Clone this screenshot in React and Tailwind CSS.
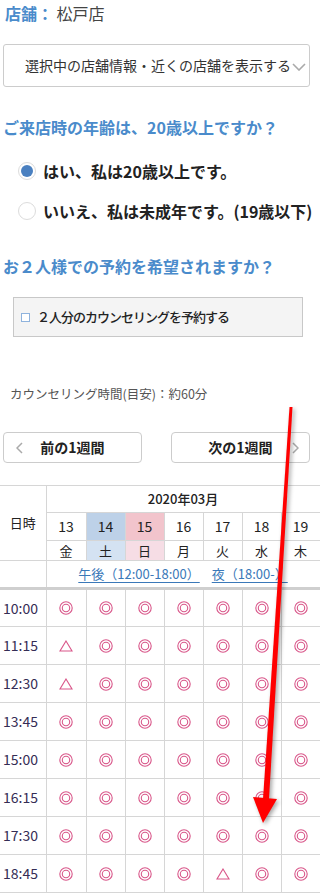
const days = [
  { d: "13", w: "金" },
  { d: "14", w: "土", dateBg: "bg-[#bdd1e8]", dayBg: "bg-[#d4e2f2]" },
  { d: "15", w: "日", dateBg: "bg-[#f2c4cc]", dayBg: "bg-[#f6dde5]" },
  { d: "16", w: "月" },
  { d: "17", w: "火" },
  { d: "18", w: "水" },
  { d: "19", w: "木" },
];

// o = ◎, t = △
const slots = [
  ["10:00", "ooooooo"],
  ["11:15", "toooooo"],
  ["12:30", "toooooo"],
  ["13:45", "ooooooo"],
  ["15:00", "ooooooo"],
  ["16:15", "ooooooo"],
  ["17:30", "ooooooo"],
  ["18:45", "ooootoo"],
];

const Mark = ({ type }) =>
  type === "o" ? (
    <svg width="14" height="14" viewBox="0 0 14 14" className="mx-auto block">
      <circle cx="7" cy="7" r="6.2" fill="none" stroke="#d9578a" strokeWidth="1.1" />
      <circle cx="7" cy="7" r="3.7" fill="none" stroke="#d9578a" strokeWidth="1.1" />
    </svg>
  ) : (
    <svg width="14" height="12" viewBox="0 0 14 12" className="mx-auto block">
      <polygon points="7,1 13,11 1,11" fill="none" stroke="#d9578a" strokeWidth="1.1" />
    </svg>
  );

const Radio = ({ checked, children }) => (
  <div className="flex items-center h-[40px] pl-[18px]">
    <span className="w-[18px] h-[18px] rounded-full border border-[#dcdcdc] bg-white flex items-center justify-center">
      {checked && <span className="w-[12px] h-[12px] rounded-full bg-[#4a80c0]" />}
    </span>
    <span className="ml-[7px] text-[16px] font-bold text-[#222] whitespace-nowrap">{children}</span>
  </div>
);

const App = () => {
  return (
    <div className="relative w-[320px] h-[895px] overflow-hidden bg-white font-['Noto_Sans_CJK_JP',sans-serif] text-[#333]">
      <div className="h-[44px] pt-[2px] pl-[5px] text-[16px] leading-[22px] whitespace-nowrap">
        <span className="font-bold text-[#4a8bcb]">店舗：</span>
        <span className="text-[#444]"> 松戸店</span>
      </div>

      <div className="ml-[3px] w-[307px] h-[43px] border border-[#cccccc] rounded-[3px] flex items-center pl-[21px] text-[14px] text-[#333] whitespace-nowrap">
        <span>選択中の店舗情報・近くの店舗を表示する</span>
        <svg width="14" height="8" viewBox="0 0 14 8" className="ml-[1px] mt-[2px]">
          <polyline points="1,1 7,7 13,1" fill="none" stroke="#aaa" strokeWidth="1.6" />
        </svg>
      </div>

      <h2 className="mt-[29px] pl-[3px] text-[16px] leading-[22px] font-bold text-[#4a8bcb] whitespace-nowrap">
        ご来店時の年齢は、20歳以上ですか？
      </h2>
      <div className="mt-[13px]">
        <Radio checked>はい、私は20歳以上です。</Radio>
        <Radio>いいえ、私は未成年です。(19歳以下)</Radio>
      </div>

      <h2 className="mt-[24px] pl-[3px] text-[16px] leading-[22px] font-bold text-[#4a8bcb] whitespace-nowrap">
        お２人様での予約を希望されますか？
      </h2>
      <div className="mt-[20px] ml-[13px] w-[290px] h-[40px] border border-[#c8c8c8] bg-[#f4f4f4] flex items-center pl-[7px]">
        <span className="w-[9px] h-[9px] border border-[#8fb3dd] bg-white" />
        <span className="ml-[7px] text-[13px] font-medium tracking-[-1px] text-[#222] whitespace-nowrap">２人分のカウンセリングを予約する</span>
      </div>

      <p className="mt-[49px] pl-[10px] text-[12.5px] leading-[16px] text-[#555] whitespace-nowrap">
        カウンセリング時間(目安)：約60分
      </p>

      <div className="mt-[30px] flex gap-[29px] pl-[3px]">
        <button className="relative w-[139px] h-[31px] border border-[#cccccc] rounded-[4px] bg-white text-[14px] font-bold text-[#222] flex items-center justify-center">
          <svg width="7" height="12" viewBox="0 0 7 12" className="absolute left-[12px] top-[9px]">
            <polyline points="6,1 1,6 6,11" fill="none" stroke="#aaa" strokeWidth="1.5" />
          </svg>
          前の1週間
        </button>
        <button className="relative w-[139px] h-[31px] border border-[#cccccc] rounded-[4px] bg-white text-[14px] font-bold text-[#222] flex items-center justify-center">
          次の1週間
          <svg width="7" height="12" viewBox="0 0 7 12" className="absolute right-[10px] top-[9px]">
            <polyline points="1,1 6,6 1,11" fill="none" stroke="#aaa" strokeWidth="1.5" />
          </svg>
        </button>
      </div>

      <table className="mt-[22px] w-[320px] table-fixed border-collapse text-center">
        <colgroup>
          <col className="w-[46px]" />
          <col className="w-[40px]" />
          <col className="w-[39px]" />
          <col className="w-[39px]" />
          <col className="w-[39px]" />
          <col className="w-[39px]" />
          <col className="w-[39px]" />
          <col className="w-[39px]" />
        </colgroup>
        <thead>
          <tr className="h-[27px]">
            <th rowSpan={3} className="border border-l-0 border-[#d6d6d6] text-[13px] font-normal text-[#222]">日時</th>
            <th colSpan={7} className="border border-[#d6d6d6] text-[13px] font-medium text-[#222]">2020年03月</th>
          </tr>
          <tr className="h-[28px]">
            {days.map((x) => (
              <td key={x.d} className={`border border-[#d6d6d6] text-[14px] text-[#222] ${x.dateBg || ""}`}>{x.d}</td>
            ))}
          </tr>
          <tr className="h-[20px]">
            {days.map((x) => (
              <td key={x.w} className={`border border-[#d6d6d6] text-[13px] leading-[18px] text-[#222] ${x.dayBg || ""}`}>{x.w}</td>
            ))}
          </tr>
          <tr className="h-[28px] border-b-[3px] border-b-[#cfcfcf]">
            <td className="border border-l-0 border-[#d6d6d6] border-b-[3px] border-b-[#cfcfcf]" />
            <td colSpan={7} className="border border-[#d6d6d6] border-b-[3px] border-b-[#cfcfcf] text-[13px] text-[#3a78b8] whitespace-nowrap">
              <span className="underline underline-offset-[3px]">午後（12:00-18:00）</span>
              <span className="ml-[12px] underline underline-offset-[3px]">夜（18:00-）</span>
            </td>
          </tr>
        </thead>
        <tbody>
          {slots.map(([time, marks]) => (
            <tr key={time} className="h-[38px]">
              <td className="border border-l-0 border-[#d6d6d6] text-left pl-[3px] text-[14px] text-[#352d55]">{time}</td>
              {marks.split("").map((m, i) => (
                <td key={i} className="border border-[#d6d6d6]">
                  <Mark type={m} />
                </td>
              ))}
            </tr>
          ))}
        </tbody>
      </table>

      {/* red annotation arrow */}
      <svg
        width="320"
        height="895"
        viewBox="0 0 320 895"
        className="absolute left-0 top-0 pointer-events-none drop-shadow-[2px_2px_2px_rgba(0,0,0,0.35)]"
      >
        <polygon points="289.5,407 292.5,407 269,799 263,799" fill="#ff0000" />
        <polygon points="253,797 277,799 263,823" fill="#ff0000" />
      </svg>
    </div>
  );
};

export default App;
